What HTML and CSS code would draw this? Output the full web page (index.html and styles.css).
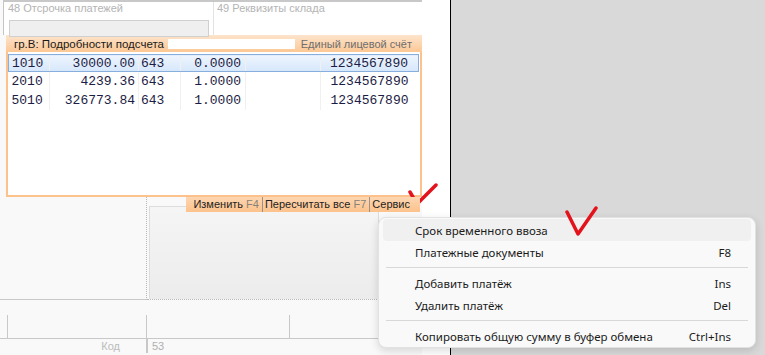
FILE: index.html
```html
<!DOCTYPE html>
<html lang="ru">
<head>
    <meta charset="UTF-8">
    <title>Подробности подсчета</title>
    <link rel="stylesheet" href="styles.css">
</head>
<body>
    <div class="screen">
        <div class="app">
            <div class="main">
                <div class="upper">
                    <div class="fields">
                        <div class="field field-wide">
                            <div class="field-label">48 Отсрочка платежей</div>
                            <div class="field-input"></div>
                        </div>
                        <div class="field">
                            <div class="field-label">49 Реквизиты склада</div>
                        </div>
                    </div>
                    <div class="panel">
                        <div class="panel-head">
                            <div class="panel-title">гр.В: Подробности подсчета</div>
                            <div class="panel-search"></div>
                            <div class="panel-hint">Единый лицевой счёт</div>
                        </div>
                        <div class="panel-body">
                            <table class="grid">
                                <tr class="selected">
                                    <td class="c-code">1010</td>
                                    <td class="c-sum">30000.00</td>
                                    <td class="c-cur">643</td>
                                    <td class="c-rate">0.0000</td>
                                    <td class="c-empty"></td>
                                    <td class="c-acc">1234567890</td>
                                </tr>
                                <tr>
                                    <td class="c-code">2010</td>
                                    <td class="c-sum">4239.36</td>
                                    <td class="c-cur">643</td>
                                    <td class="c-rate">1.0000</td>
                                    <td class="c-empty"></td>
                                    <td class="c-acc">1234567890</td>
                                </tr>
                                <tr>
                                    <td class="c-code">5010</td>
                                    <td class="c-sum">326773.84</td>
                                    <td class="c-cur">643</td>
                                    <td class="c-rate">1.0000</td>
                                    <td class="c-empty"></td>
                                    <td class="c-acc">1234567890</td>
                                </tr>
                            </table>
                        </div>
                        <div class="panel-tools">
                            <div class="tool">Изменить <span class="key">F4</span></div>
                            <div class="tool">Пересчитать все <span class="key">F7</span></div>
                            <div class="tool">Сервис</div>
                        </div>
                    </div>
                </div>
                <div class="lower">
                    <div class="work">
                        <div class="work-left"></div>
                        <div class="work-right">
                            <div class="work-box"></div>
                        </div>
                    </div>
                    <div class="lines">
                        <div class="line-cell line-a"></div>
                        <div class="line-cell line-b"></div>
                        <div class="line-cell line-c"></div>
                        <div class="line-cell line-d"></div>
                    </div>
                    <div class="footer">
                        <div class="footer-left">Код</div>
                        <div class="footer-right">53</div>
                    </div>
                </div>
            </div>
            <div class="strip"></div>
        </div>
        <div class="backdrop"></div>

        <div class="menu">
            <div class="menu-item active"><span>Срок временного ввоза</span></div>
            <div class="menu-item"><span>Платежные документы</span><span>F8</span></div>
            <div class="menu-sep"></div>
            <div class="menu-item"><span>Добавить платёж</span><span>Ins</span></div>
            <div class="menu-item"><span>Удалить платёж</span><span>Del</span></div>
            <div class="menu-sep"></div>
            <div class="menu-item"><span>Копировать общую сумму в буфер обмена</span><span>Ctrl+Ins</span></div>
        </div>

        <svg class="check check-one" width="32" height="26" viewBox="0 0 32 26">
            <path d="M3 9 L10 21 L29 2" />
        </svg>
        <svg class="check check-two" width="34" height="32" viewBox="0 0 34 32">
            <path d="M2 6 L13 28 L31 2" />
        </svg>
    </div>
</body>
</html>
```

FILE: styles.css
```css
body {
    margin: 0;
    font-family: "Liberation Sans", Arial, sans-serif;
    font-size: 11px;
    color: #1e1e1e;
}
.screen {
    position: relative;
    width: 765px;
    height: 355px;
    display: flex;
    overflow: hidden;
    background-color: #d9d9d9;
}
.app {
    width: 450px;
    height: 355px;
    display: flex;
    border-right: 1px solid #000;
    background-color: #f9f9f9;
}
.main {
    width: 422px;
    display: flex;
    flex-direction: column;
}
.strip {
    flex: 1;
    background-color: #fff;
}
.backdrop {
    flex: 1;
}

/* upper part */
.upper {
    margin-left: 3px;
    border-top: 2px solid #c8c8c8;
}
.fields {
    height: 33px;
    display: flex;
    border-left: 1px solid #c4c4c4;
    background-color: #fff;
}
.field {
    flex: 1;
    padding-left: 3px;
}
.field-wide {
    flex: none;
    width: 205px;
    border-right: 1px solid #e2e2e2;
    padding-left: 4px;
}
.field-label {
    font-size: 11px;
    line-height: 12px;
    color: #b4b4b4;
}
.field-input {
    width: 198px;
    height: 15px;
    margin: 6px 0 0 1px;
    background-color: #efefef;
    border: 1px solid #d0d0d0;
}
.panel {
    margin-left: 3px;
    width: 416px;
}
.panel-head {
    height: 17px;
    display: flex;
    align-items: center;
    white-space: nowrap;
    background: linear-gradient(#fde4cc, #fcc895);
}
.panel-title {
    width: 154px;
    padding-left: 8px;
    font-size: 11.5px;
    color: #1a1a1a;
}
.panel-search {
    width: 127px;
    height: 10px;
    background-color: #fff;
}
.panel-hint {
    flex: 1;
    text-align: right;
    padding-right: 10px;
    font-size: 11px;
    color: #6e6e6e;
}
.panel-body {
    border: 2px solid #fdc28c;
    border-top: none;
    padding-top: 2px;
    background-color: #fff;
    box-sizing: border-box;
    height: 145px;
}
.grid {
    border-collapse: collapse;
    width: 411px;
    table-layout: fixed;
    font-family: "Liberation Mono", "Courier New", monospace;
    font-size: 13px;
    color: #1c1c44;
}
.grid td {
    height: 19px;
    padding: 0;
    border-left: 1px solid #f0f0f0;
    white-space: nowrap;
}
.grid td:first-child {
    border-left: none;
}
.grid .selected td {
    background: linear-gradient(#eef5fe, #d6e7fb);
    border-top: 1px solid #87aedd;
    border-bottom: 1px solid #87aedd;
    height: 16px;
}
.grid .selected td:first-child {
    border-left: 1px solid #87aedd;
}
.grid .selected td:last-child {
    border-right: 1px solid #87aedd;
}
.c-code {
    width: 37px;
    padding-left: 3px !important;
}
.c-sum {
    width: 85px;
    text-align: right;
    padding-right: 3px !important;
}
.c-cur {
    width: 39px;
    padding-left: 2px !important;
}
.c-rate {
    width: 60px;
    text-align: right;
    padding-right: 4px !important;
}
.c-empty {
    width: 74px;
}
.c-acc {
    text-align: right;
    padding-right: 10px !important;
}
.panel-tools {
    position: relative;
    z-index: 2;
    height: 15px;
    display: flex;
    justify-content: flex-end;
    margin-right: 2px;
    white-space: nowrap;
}
.tool {
    padding: 0 3px 0 2px;
    line-height: 15px;
    font-size: 11px;
    background: linear-gradient(#fdd6b2, #fcc28c);
    border-left: 1px solid #9c9188;
}
.tool:first-child {
    border-left: none;
    padding-left: 7px;
}
.tool:last-child {
    padding-right: 10px;
}
.key {
    color: #8a8278;
}

/* lower part */
.lower {
    margin-top: -15px;
    display: flex;
    flex-direction: column;
    flex: 1;
}
.work {
    height: 103px;
    display: flex;
}
.work-left {
    width: 146px;
    border-right: 1px dotted #b8b8b8;
    border-bottom: 1px solid #c8c8c8;
}
.work-right {
    width: 230px;
    padding: 9px 0 0 2px;
    border-bottom: 1px dotted #b8b8b8;
}
.work-box {
    height: 92px;
    border: 1px solid #dcdcdc;
    border-bottom: none;
    background: linear-gradient(#f5f5f5, #ececec);
}
.lines {
    height: 38px;
    width: 380px;
    display: flex;
    border-bottom: 1px solid #c8c8c8;
}
.line-cell {
    margin-top: 15px;
    border-right: 1px solid #c8c8c8;
}
.line-a {
    width: 7px;
}
.line-b {
    width: 138px;
}
.line-c {
    width: 142px;
}
.line-d {
    flex: 1;
    border-right: none;
}
.footer {
    display: flex;
    height: 14px;
    font-size: 11px;
    line-height: 14px;
    color: #bcbcbc;
}
.footer-left {
    width: 120px;
    padding-right: 26px;
    text-align: right;
    border-right: 2px solid #c8c8c8;
}
.footer-right {
    padding-left: 4px;
    color: #b0b0b0;
}

/* context menu */
.menu {
    position: absolute;
    left: 378px;
    top: 217px;
    width: 378px;
    height: 131px;
    box-sizing: border-box;
    padding: 1px 4px;
    background-color: #f9f9f9;
    border: 1px solid #e2e2e2;
    border-radius: 8px;
    box-shadow: 0 3px 8px rgba(0, 0, 0, 0.14);
    font-family: "Noto Sans", sans-serif;
    font-size: 11.5px;
    color: #1b1b1b;
}
.menu-item {
    height: 22px;
    display: flex;
    align-items: center;
    justify-content: space-between;
    padding: 0 20px 0 32px;
    border-radius: 4px;
}
.menu-item.active {
    background-color: #f0f0f0;
}
.menu-sep {
    height: 1px;
    margin: 4px 3px;
    background-color: #d8d8d8;
}

/* hand-drawn marks */
.check {
    position: absolute;
    fill: none;
    stroke: #e3121b;
    stroke-width: 3.5;
    stroke-linecap: round;
    stroke-linejoin: round;
}
.check-one {
    left: 407px;
    top: 183px;
}
.check-two {
    left: 565px;
    top: 206px;
}
```
